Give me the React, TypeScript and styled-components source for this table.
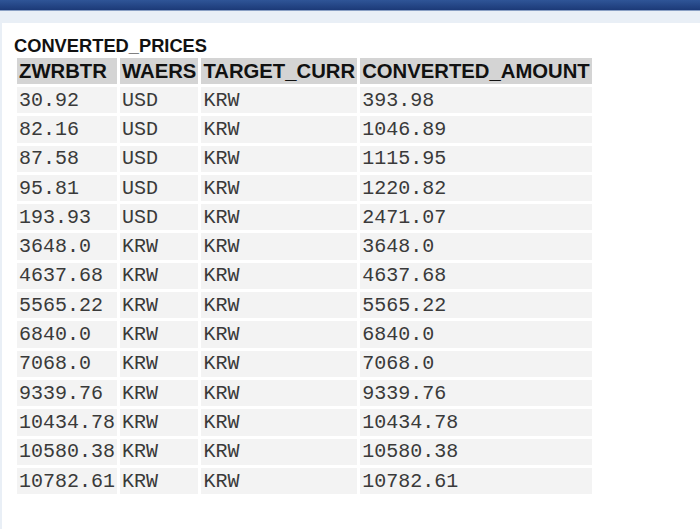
import React from "react";
import styled, { createGlobalStyle } from "styled-components";

const Global = createGlobalStyle`
  html, body { margin: 0; padding: 0; background: #e9eff6; }
  body { width: 700px; height: 529px; overflow: hidden; }
`;

const Page = styled.div`
  display: flex;
  flex-direction: column;
  height: 529px;
`;

const TopBar = styled.div`
  height: 10px;
  background: linear-gradient(to bottom, #2f5597 0%, #1c3a78 100%);
  border-bottom: 1px solid #8aa0c4;
`;

const SubBar = styled.div`
  height: 12px;
  background: #e9eff6;
`;

const Panel = styled.div`
  flex: 1;
  margin-left: 2px;
  background: #ffffff;
  padding: 12px 0 0 12px;
`;

const Title = styled.div`
  font-family: "Liberation Sans", Arial, sans-serif;
  font-weight: bold;
  font-size: 18.3px;
  line-height: 21px;
  color: #111;
`;

const Table = styled.table`
  border-collapse: separate;
  border-spacing: 3px;
  margin-top: -1px;
`;

const Th = styled.th`
  background: #d4d4d4;
  font-family: "Liberation Sans", Arial, sans-serif;
  font-weight: bold;
  font-size: 20.3px;
  color: #111;
  text-align: left;
  padding: 0 2px;
  height: 26px;
  white-space: nowrap;
`;

const Td = styled.td`
  background: #f3f3f3;
  font-family: "Liberation Mono", "Courier New", monospace;
  font-size: 20px;
  color: #3a3a3a;
  padding: 0 2px;
  height: 26.3px;
  white-space: nowrap;
`;

const rows: [string, string, string, string][] = [
  ["30.92", "USD", "KRW", "393.98"],
  ["82.16", "USD", "KRW", "1046.89"],
  ["87.58", "USD", "KRW", "1115.95"],
  ["95.81", "USD", "KRW", "1220.82"],
  ["193.93", "USD", "KRW", "2471.07"],
  ["3648.0", "KRW", "KRW", "3648.0"],
  ["4637.68", "KRW", "KRW", "4637.68"],
  ["5565.22", "KRW", "KRW", "5565.22"],
  ["6840.0", "KRW", "KRW", "6840.0"],
  ["7068.0", "KRW", "KRW", "7068.0"],
  ["9339.76", "KRW", "KRW", "9339.76"],
  ["10434.78", "KRW", "KRW", "10434.78"],
  ["10580.38", "KRW", "KRW", "10580.38"],
  ["10782.61", "KRW", "KRW", "10782.61"],
];

export default function App() {
  return (
    <>
      <Global />
      <Page>
        <TopBar />
        <SubBar />
        <Panel>
          <Title>CONVERTED_PRICES</Title>
          <Table>
            <thead>
              <tr>
                <Th>ZWRBTR</Th>
                <Th>WAERS</Th>
                <Th>TARGET_CURR</Th>
                <Th>CONVERTED_AMOUNT</Th>
              </tr>
            </thead>
            <tbody>
              {rows.map((r, i) => (
                <tr key={i}>
                  {r.map((c, j) => (
                    <Td key={j}>{c}</Td>
                  ))}
                </tr>
              ))}
            </tbody>
          </Table>
        </Panel>
      </Page>
    </>
  );
}
